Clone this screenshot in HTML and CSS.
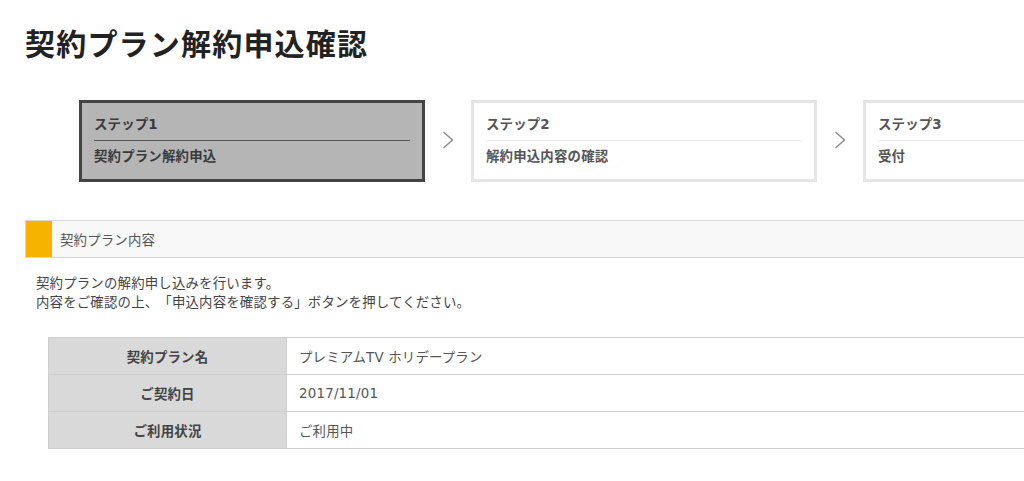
FILE: index.html
```html
<!DOCTYPE html>
<html lang="ja">
<head>
<meta charset="utf-8">
<title>契約プラン解約申込確認</title>
<link rel="stylesheet" href="styles.css">
</head>
<body>
<div class="page">
  <h1 class="title">契約プラン解約申込確認</h1>

  <div class="steps">
    <div class="step step-current">
      <div class="step-label">ステップ1</div>
      <div class="step-name">契約プラン解約申込</div>
    </div>
    <div class="step-arrow">
      <svg width="12" height="18" viewBox="0 0 12 18"><polyline points="1.5,1 10.5,9 1.5,17" fill="none" stroke="#8a8a8a" stroke-width="1.4"/></svg>
    </div>
    <div class="step">
      <div class="step-label">ステップ2</div>
      <div class="step-name">解約申込内容の確認</div>
    </div>
    <div class="step-arrow">
      <svg width="12" height="18" viewBox="0 0 12 18"><polyline points="1.5,1 10.5,9 1.5,17" fill="none" stroke="#8a8a8a" stroke-width="1.4"/></svg>
    </div>
    <div class="step">
      <div class="step-label">ステップ3</div>
      <div class="step-name">受付</div>
    </div>
  </div>

  <div class="section-head">
    <span class="section-mark"></span>
    <span class="section-title">契約プラン内容</span>
  </div>

  <p class="lead">契約プランの解約申し込みを行います。<br>内容をご確認の上、「申込内容を確認する」ボタンを押してください。</p>

  <table class="info">
    <tr><th>契約プラン名</th><td>プレミアムTV ホリデープラン</td></tr>
    <tr><th>ご契約日</th><td>2017/11/01</td></tr>
    <tr><th>ご利用状況</th><td>ご利用中</td></tr>
  </table>
</div>
</body>
</html>
```

FILE: styles.css
```css
* { box-sizing: border-box; }
html, body { margin: 0; padding: 0; background: #fff; }
body {
  font-family: "DejaVu Sans", "Noto Sans CJK JP", sans-serif;
  color: #444;
  width: 1024px;
  height: 481px;
  overflow: hidden;
  text-spacing-trim: space-all;
  letter-spacing: 0.2px;
}
.page {
  padding: 21px 0 0 25px;
  width: 1024px;
  height: 481px;
  overflow: hidden;
}
.title {
  margin: 0;
  font-family: "Noto Sans CJK JP", sans-serif;
  font-size: 30px;
  line-height: 42px;
  font-weight: bold;
  color: #222;
  letter-spacing: 1.2px;
}
.steps {
  display: flex;
  margin: 37px 0 0 54px;
  width: 1100px;
}
.step {
  flex: 0 0 346px;
  height: 82px;
  border: 3px solid #e5e5e5;
  background: #fff;
  padding: 12px 12px 0;
  font-size: 13.4px;
  font-weight: bold;
  color: #555;
}
.step-current {
  border-color: #444;
  background: #b5b5b5;
  color: #3a3a3a;
}
.step-label {
  line-height: 20px;
  padding-bottom: 5px;
  border-bottom: 1px solid #e8e8e8;
}
.step-current .step-label { border-bottom-color: #555; }
.step-name {
  line-height: 20px;
  margin-top: 6px;
}
.step-arrow {
  flex: 0 0 46px;
  display: flex;
  align-items: center;
  justify-content: center;
  padding-bottom: 2px;
}
.section-head {
  display: flex;
  align-items: stretch;
  margin-top: 38px;
  width: 1100px;
  height: 38px;
  border: 1px solid #d8d8d8;
  background: #f8f8f8;
}
.section-mark {
  flex: 0 0 26px;
  background: #f6b400;
}
.section-title {
  display: flex;
  align-items: center;
  padding-left: 8px;
  font-size: 13.4px;
  color: #555;
}
.lead {
  margin: 16px 0 0 11px;
  font-size: 13.4px;
  line-height: 19px;
  color: #444;
}
.info {
  margin: 25px 0 0 23px;
  border-collapse: collapse;
  width: 1000px;
  font-size: 13.4px;
}
.info th, .info td {
  height: 37px;
  border: 1px solid #cfcfcf;
  padding: 0 12px;
}
.info th {
  width: 238px;
  background: #d9d9d9;
  color: #444;
  font-weight: bold;
  text-align: center;
}
.info td {
  color: #555;
  text-align: left;
}
```
